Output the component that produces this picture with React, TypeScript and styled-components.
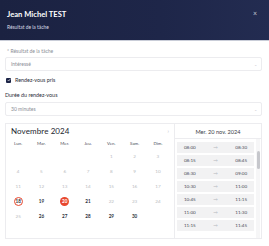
import React from 'react';
import styled, { createGlobalStyle } from 'styled-components';

const GlobalStyle = createGlobalStyle`
  body {
    margin: 0;
    background: #ffffff;
    font-family: Lato, "Noto Sans", sans-serif;
  }
`;

const Modal = styled.div`
  width: 269px;
  height: 246px;
  overflow: hidden;
  background: #ffffff;
`;

const Header = styled.header`
  height: 41px;
  box-sizing: border-box;
  padding: 10px 7px 0;
  display: flex;
  justify-content: space-between;
  background: linear-gradient(90deg, #1b2241 0%, #1e2649 60%, #232c51 100%);
  border-bottom: 1px solid #c9cdd8;
`;

const Titles = styled.div`
  display: flex;
  flex-direction: column;
  gap: 5px;
`;

const Title = styled.h1`
  margin: 0;
  font-size: 7.6px;
  line-height: 9px;
  font-weight: 700;
  color: #ffffff;
`;

const Subtitle = styled.span`
  font-size: 4.9px;
  line-height: 6px;
  color: #d9dce6;
`;

const Close = styled.span`
  font-size: 7px;
  line-height: 7px;
  color: #c8ccd8;
  margin-right: 5px;
  margin-top: 0;
`;

const Body = styled.div`
  padding: 0 7px 0 5px;
`;

const Label = styled.div<{ $strong?: boolean }>`
  font-size: ${(p) => (p.$strong ? '5.4px' : '5px')};
  line-height: 6px;
  color: ${(p) => (p.$strong ? '#2c2f3a' : '#8a8d96')};
  padding-left: ${(p) => (p.$strong ? '0' : '2px')};
`;

const Select = styled.div`
  height: 14px;
  box-sizing: border-box;
  border: 1px solid #ececef;
  border-radius: 2px;
  display: flex;
  align-items: center;
  justify-content: space-between;
  padding: 0 4px 0 5px;
  font-size: 5px;
  color: #8a8d96;
`;

const Chevron = styled.span`
  font-size: 4px;
  color: #c5c7cd;
`;

const CheckRow = styled.label`
  display: flex;
  align-items: center;
  gap: 4px;
  padding-left: 1px;
  font-size: 5.4px;
  line-height: 6px;
  color: #2c2f3a;
`;

const Box = styled.span`
  width: 5px;
  height: 5px;
  border-radius: 1px;
  background: #1d2547;
  display: inline-flex;
  align-items: center;
  justify-content: center;
`;

const Calendar = styled.div`
  margin-top: 7px;
  height: 116px;
  box-sizing: border-box;
  border: 1px solid #ececef;
  display: grid;
  grid-template-columns: 168px 1fr;
`;

const MonthPane = styled.div`
  padding-top: 2px;
`;

const MonthHead = styled.div`
  display: flex;
  justify-content: space-between;
  align-items: center;
  padding: 0 5px 0 5px;
  height: 10px;
`;

const MonthTitle = styled.span`
  font-size: 8px;
  color: #23262f;
  letter-spacing: 0.1px;
`;

const NavArrow = styled.span`
  font-size: 5px;
  color: #b8bac0;
`;

const DayGrid = styled.div`
  display: grid;
  grid-template-columns: repeat(7, 23.3px);
  grid-template-rows: 7px repeat(5, 15.2px);
  margin-top: 5px;
  padding-left: 0.5px;
`;

const DayName = styled.span`
  font-size: 4.4px;
  line-height: 6px;
  color: #4a4d57;
  text-align: center;
`;

const Day = styled.span<{ $tone: 'muted' | 'active' | 'today' | 'selected' }>`
  justify-self: center;
  align-self: center;
  width: 9px;
  height: 9px;
  box-sizing: border-box;
  border-radius: 50%;
  display: flex;
  align-items: center;
  justify-content: center;
  font-size: 4.6px;
  font-weight: ${(p) => (p.$tone === 'muted' ? 400 : 700)};
  color: ${(p) =>
    p.$tone === 'muted' ? '#b9bbc1' : p.$tone === 'selected' ? '#ffffff' : '#2c2f3a'};
  background: ${(p) => (p.$tone === 'selected' ? '#e8472e' : 'transparent')};
  border: ${(p) => (p.$tone === 'today' ? '0.8px solid #e8472e' : 'none')};
`;

const SlotPane = styled.div`
  border-left: 1px solid #ececef;
  display: flex;
  flex-direction: column;
  min-height: 0;
`;

const SlotHead = styled.div`
  height: 14px;
  flex-shrink: 0;
  border-bottom: 1px solid #ececef;
  display: flex;
  align-items: center;
  justify-content: center;
  font-size: 5.6px;
  color: #3a3d47;
`;

const SlotBody = styled.div`
  flex: 1;
  min-height: 0;
  display: flex;
  overflow: hidden;
`;

const SlotList = styled.div`
  flex: 1;
  padding: 2.5px 2px 0 2px;
  display: flex;
  flex-direction: column;
  gap: 2px;
  overflow: hidden;
`;

const Slot = styled.div`
  height: 11px;
  flex-shrink: 0;
  background: #f2f2f3;
  display: grid;
  grid-template-columns: repeat(3, 1fr);
  align-items: center;
  justify-items: center;
  font-size: 4.6px;
  color: #4a4d57;
`;

const Arrow = styled.span`
  color: #b6b8be;
`;

const Track = styled.div`
  width: 4px;
  margin-right: 1px;
  background: #f6f6f7;
  padding-top: 12px;
`;

const Thumb = styled.div`
  width: 3px;
  height: 18px;
  margin: 0 auto;
  border-radius: 2px;
  background: #c6c7cc;
`;

type Tone = 'muted' | 'active' | 'today' | 'selected';

const days: { n: number; tone: Tone }[] = [];
for (let n = 1; n <= 30; n++) {
  let tone: Tone = 'muted';
  if ([19, 21, 26, 27, 28, 29, 30].includes(n)) tone = 'active';
  if (n === 18) tone = 'today';
  if (n === 20) tone = 'selected';
  days.push({ n, tone });
}

const slots = [
  ['08:00', '08:30'],
  ['08:15', '08:45'],
  ['08:30', '09:00'],
  ['10:30', '11:00'],
  ['10:45', '11:15'],
  ['11:00', '11:30'],
  ['11:15', '11:45'],
];

const dayNames = ['Lun.', 'Mar.', 'Mer.', 'Jeu.', 'Ven.', 'Sam.', 'Dim.'];

const App: React.FC = () => {
  return (
    <Modal>
      <GlobalStyle />
      <Header>
        <Titles>
          <Title>Jean Michel TEST</Title>
          <Subtitle>Résultat de la tâche</Subtitle>
        </Titles>
        <Close>×</Close>
      </Header>
      <Body>
        <Label style={{ marginTop: 7 }}>* Résultat de la tâche</Label>
        <div style={{ marginTop: 3 }}>
          <Select>
            Intéressé
            <Chevron>⌄</Chevron>
          </Select>
        </div>
        <div style={{ marginTop: 6 }}>
          <CheckRow>
            <Box>
              <svg width="4" height="4" viewBox="0 0 8 8">
                <path d="M1.5 4.2 L3.3 6 L6.6 2" stroke="#fff" strokeWidth="1.3" fill="none" />
              </svg>
            </Box>
            Rendez-vous pris
          </CheckRow>
        </div>
        <Label $strong style={{ marginTop: 9 }}>Durée du rendez-vous</Label>
        <div style={{ marginTop: 4 }}>
          <Select>
            30 minutes
            <Chevron>⌄</Chevron>
          </Select>
        </div>
        <Calendar>
          <MonthPane>
            <MonthHead>
              <MonthTitle>Novembre 2024</MonthTitle>
              <NavArrow>›</NavArrow>
            </MonthHead>
            <DayGrid>
              {dayNames.map((d) => (
                <DayName key={d}>{d}</DayName>
              ))}
              {[0, 1, 2, 3].map((i) => (
                <span key={'e' + i} />
              ))}
              {days.map((d) => (
                <Day key={d.n} $tone={d.tone}>
                  {d.n}
                </Day>
              ))}
            </DayGrid>
          </MonthPane>
          <SlotPane>
            <SlotHead>Mer. 20 nov. 2024</SlotHead>
            <SlotBody>
              <SlotList>
                {slots.map(([a, b]) => (
                  <Slot key={a}>
                    <span>{a}</span>
                    <Arrow>→</Arrow>
                    <span>{b}</span>
                  </Slot>
                ))}
              </SlotList>
              <Track>
                <Thumb />
              </Track>
            </SlotBody>
          </SlotPane>
        </Calendar>
      </Body>
    </Modal>
  );
};

export default App;
